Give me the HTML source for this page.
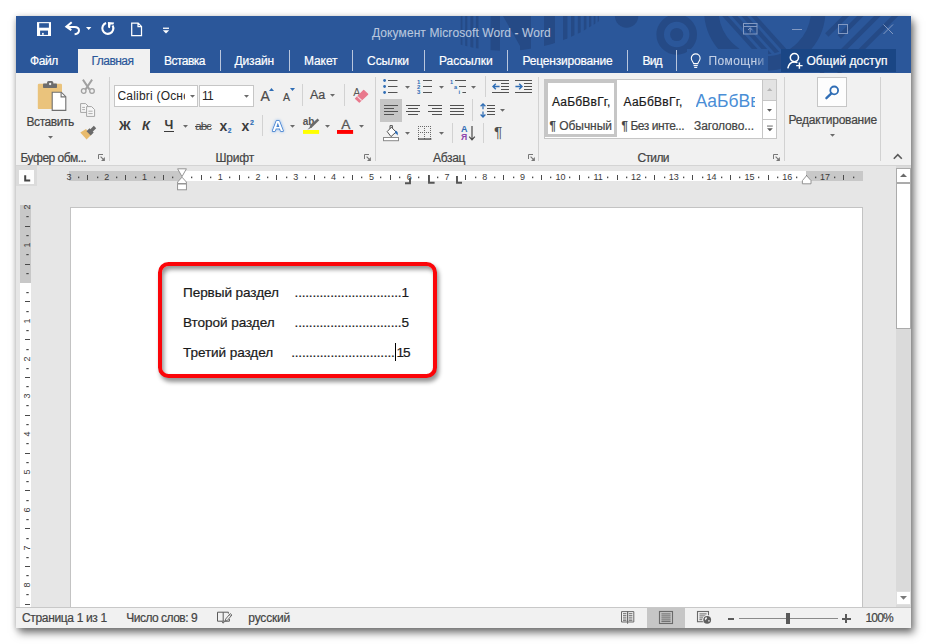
<!DOCTYPE html>
<html lang="ru"><head><meta charset="utf-8"><title>Документ Microsoft Word - Word</title>
<style>
html,body{margin:0;padding:0}
body{width:927px;height:644px;overflow:hidden;background:#fff;position:relative;font-family:"Liberation Sans", sans-serif;font-size:12px}
svg{overflow:visible}
span{-webkit-text-stroke:0.2px currentColor}
</style></head><body>
<div style="position:absolute;left:16px;top:16px;width:895px;height:612px;background:#f1f1f1;box-shadow:0 1px 6px rgba(0,0,0,0.2),3px 5px 8px rgba(0,0,0,0.5);"></div>
<div style="position:absolute;left:16px;top:16px;width:895px;height:57px;background:#2b579a;"></div>
<svg style="position:absolute;left:16px;top:16px;" width="895" height="57" viewBox="0 0 895 57"><defs><clipPath id="bowl"><circle cx="489" cy="-128" r="163"/></clipPath>
<clipPath id="tb"><rect x="0" y="0" width="895" height="57"/></clipPath>
<clipPath id="disc"><circle cx="748.8" cy="-6" r="44.3"/></clipPath><clipPath id="rs"><circle cx="830" cy="-50" r="78"/></clipPath></defs>
<g clip-path="url(#tb)" fill="#254a86">
<g clip-path="url(#bowl)"><rect x="444.7" y="0" width="1.7" height="57"/><rect x="449.2" y="0" width="2.1" height="57"/><rect x="454.4" y="0" width="2.9" height="57"/><rect x="459.9" y="0" width="2.6" height="57"/><rect x="474.6" y="0" width="9.4" height="57"/><rect x="504" y="0" width="11" height="57"/><rect x="528" y="0" width="11" height="57"/><rect x="547" y="0" width="4.4" height="57"/><rect x="555" y="0" width="3.4" height="57"/><rect x="561.8" y="0" width="2.9" height="57"/><rect x="567.8" y="0" width="2.6" height="57"/><rect x="573" y="0" width="2.3" height="57"/><rect x="577.7" y="0" width="1.7" height="57"/><rect x="581.7" y="0" width="1.2" height="57"/><path d="M487 0 L504 30 V0Z"/></g>
<circle cx="610.6" cy="0" r="11.7"/>
<circle cx="660.7" cy="18.5" r="16.5" fill="none" stroke="#254a86" stroke-width="7.6"/>
<circle cx="660.7" cy="18.5" r="6.6"/>
<circle cx="748.8" cy="-6" r="53.5" fill="none" stroke="#254a86" stroke-width="14.5"/>
<g clip-path="url(#disc)" stroke="#254a86" stroke-width="4.2">
<line x1="703.6" y1="-6" x2="750.4" y2="46"/><line x1="713.2" y1="-6" x2="760.0" y2="46"/><line x1="722.8" y1="-6" x2="769.6" y2="46"/><line x1="732.4" y1="-6" x2="779.2" y2="46"/>
</g>
<g stroke="#254a86" stroke-width="4.6">
<line x1="833.8" y1="-4" x2="810.8" y2="19"/><line x1="848.3" y1="-4" x2="823.3" y2="21"/><line x1="865.4" y1="-4" x2="804.4" y2="57"/><line x1="883" y1="-4" x2="822" y2="57"/>
</g>
</g></svg>
<svg style="position:absolute;left:36px;top:21px;" width="16" height="16" viewBox="0 0 16 16"><rect x="1" y="1.1" width="14" height="13.9" fill="#fff"/>
<rect x="3.2" y="2.2" width="9.7" height="4.5" fill="#2b579a"/>
<rect x="4.1" y="9.6" width="7.9" height="4.3" fill="#2b579a"/><rect x="6.1" y="11.9" width="1.6" height="1.9" fill="#fff"/></svg>
<svg style="position:absolute;left:65px;top:20px;" width="18" height="17" viewBox="0 0 18 17"><path d="M2.2 7 H9.4 C12.4 7 14 8.8 14 10.6 C14 12.6 12.4 14 9.6 14.3" fill="none" stroke="#fff" stroke-width="2"/>
<path d="M6.7 2.3 L1.4 6.6 L6.3 10.2" fill="none" stroke="#fff" stroke-width="2.1"/></svg>
<svg style="position:absolute;left:86px;top:26.5px;" width="6" height="4" viewBox="0 0 6 4"><path d="M0 0 H5.4 L2.7 3Z" fill="#fff"/></svg>
<svg style="position:absolute;left:100px;top:21px;" width="16" height="16" viewBox="0 0 16 16"><path d="M6.1 2.1 A5.5 5.5 0 1 0 12.6 4.6" fill="none" stroke="#fff" stroke-width="2.1"/>
<path d="M7.9 0.9 L14.2 1.6 L13.4 3.6 L10.6 3.5 L9.9 7.2 L8.1 6.4Z" fill="#fff"/></svg>
<svg style="position:absolute;left:130px;top:22px;" width="13" height="15" viewBox="0 0 13 15"><path d="M1.7 1.1 H8.2 L11.5 4.4 V13.5 H1.7Z M8 1.2 V4.6 H11.4" fill="none" stroke="#fff" stroke-width="1.25"/></svg>
<svg style="position:absolute;left:161.5px;top:27.4px;" width="8" height="8" viewBox="0 0 8 8"><rect x="1" y="0.6" width="6" height="1.3" fill="#fff"/><path d="M0.8 3.2 H7.2 L4 6.6Z" fill="#fff"/></svg>
<span id="t0" style="position:absolute;left:372px;top:24.5px;font-size:12px;line-height:17px;color:#b9c7de;white-space:nowrap;letter-spacing:0.09px;-webkit-text-stroke:0.1px #b9c7de;">Документ Microsoft Word - Word</span>
<svg style="position:absolute;left:743px;top:23px;" width="15" height="12" viewBox="0 0 15 12"><rect x="0.5" y="0.5" width="13.5" height="10.5" fill="none" stroke="#8299c2" stroke-width="1"/><line x1="0.5" y1="3.5" x2="14" y2="3.5" stroke="#8299c2"/><path d="M7.2 9.5 V5 M5 7 L7.2 4.9 L9.4 7" fill="none" stroke="#8299c2" stroke-width="1"/></svg>
<svg style="position:absolute;left:792px;top:29px;" width="11" height="1" viewBox="0 0 11 1"><rect x="0" y="0" width="10" height="1" fill="#8299c2"/></svg>
<svg style="position:absolute;left:838px;top:24px;" width="10" height="10" viewBox="0 0 10 10"><rect x="0.5" y="0.5" width="9" height="9" fill="none" stroke="#8299c2" stroke-width="1"/></svg>
<svg style="position:absolute;left:883px;top:24px;" width="11" height="11" viewBox="0 0 11 11"><path d="M0.5 0.5 L10 10 M10 0.5 L0.5 10" stroke="#8299c2" stroke-width="1" fill="none"/></svg>
<div style="position:absolute;left:78px;top:49px;width:72px;height:24px;background:#f1f1f1;"></div>
<span id="t1" style="position:absolute;left:30px;top:52.9px;font-size:12px;line-height:17px;color:#fff;white-space:nowrap;letter-spacing:-0.38px;">Файл</span>
<span id="t2" style="position:absolute;left:91.5px;top:52.9px;font-size:12px;line-height:17px;color:#2b579a;white-space:nowrap;letter-spacing:-0.53px;">Главная</span>
<span id="t3" style="position:absolute;left:164px;top:52.9px;font-size:12px;line-height:17px;color:#fff;white-space:nowrap;letter-spacing:-0.52px;">Вставка</span>
<span id="t4" style="position:absolute;left:234.5px;top:52.9px;font-size:12px;line-height:17px;color:#fff;white-space:nowrap;letter-spacing:-0.14px;">Дизайн</span>
<span id="t5" style="position:absolute;left:304px;top:52.9px;font-size:12px;line-height:17px;color:#fff;white-space:nowrap;letter-spacing:-0.09px;">Макет</span>
<span id="t6" style="position:absolute;left:367px;top:52.9px;font-size:12px;line-height:17px;color:#fff;white-space:nowrap;letter-spacing:-0.04px;">Ссылки</span>
<span id="t7" style="position:absolute;left:439px;top:52.9px;font-size:12px;line-height:17px;color:#fff;white-space:nowrap;letter-spacing:-0.04px;">Рассылки</span>
<span id="t8" style="position:absolute;left:522.5px;top:52.9px;font-size:12px;line-height:17px;color:#fff;white-space:nowrap;letter-spacing:-0.19px;">Рецензирование</span>
<span id="t9" style="position:absolute;left:642.5px;top:52.9px;font-size:12px;line-height:17px;color:#fff;white-space:nowrap;letter-spacing:-0.81px;">Вид</span>
<div style="position:absolute;left:219.5px;top:50px;width:1px;height:21px;background:#b9c6dd;"></div>
<div style="position:absolute;left:288.5px;top:50px;width:1px;height:21px;background:#b9c6dd;"></div>
<div style="position:absolute;left:351.5px;top:50px;width:1px;height:21px;background:#b9c6dd;"></div>
<div style="position:absolute;left:423.5px;top:50px;width:1px;height:21px;background:#b9c6dd;"></div>
<div style="position:absolute;left:507.0px;top:50px;width:1px;height:21px;background:#b9c6dd;"></div>
<div style="position:absolute;left:627.0px;top:50px;width:1px;height:21px;background:#b9c6dd;"></div>
<div style="position:absolute;left:675.5px;top:50px;width:1px;height:21px;background:#b9c6dd;"></div>
<div style="position:absolute;left:687px;top:49px;width:81px;height:23px;background:#2b579a;"></div>
<svg style="position:absolute;left:690px;top:53.4px;" width="12" height="17" viewBox="0 0 12 17"><path d="M3.6 10.6 C3.4 9 1.3 8 1.3 5.3 C1.3 2.8 3.3 0.9 5.7 0.9 C8.1 0.9 10.1 2.8 10.1 5.3 C10.1 8 8 9 7.8 10.6 Z" fill="none" stroke="#fff" stroke-width="1.1"/>
<line x1="3.6" y1="12.6" x2="7.8" y2="12.6" stroke="#fff" stroke-width="1.1"/><line x1="4.2" y1="14.4" x2="7.2" y2="14.4" stroke="#fff" stroke-width="1.1"/></svg>
<span id="t10" style="position:absolute;left:708.5px;top:52.9px;font-size:12px;line-height:17px;color:#c3cfe5;white-space:nowrap;letter-spacing:0.37px;-webkit-text-stroke:0.1px #c3cfe5;-webkit-mask-image:linear-gradient(90deg,#000 84%,rgba(0,0,0,0.3) 100%);">Помощни</span>
<div style="position:absolute;left:781px;top:49px;width:115px;height:23px;background:#1a4685;"></div>
<svg style="position:absolute;left:787px;top:52px;" width="17" height="17" viewBox="0 0 17 17"><circle cx="7.4" cy="5.6" r="4.1" fill="none" stroke="#fff" stroke-width="1.55"/>
<path d="M0.8 16.4 C1.6 12 4 9.9 7.4 9.9 C8.6 9.9 9.6 10.2 10.4 10.7" fill="none" stroke="#fff" stroke-width="1.55"/>
<path d="M12.4 10.4 V16.8 M9.2 13.6 H15.6" stroke="#fff" stroke-width="1.45"/></svg>
<span id="t11" style="position:absolute;left:806.5px;top:52.9px;font-size:12px;line-height:17px;color:#fff;white-space:nowrap;letter-spacing:0.03px;">Общий доступ</span>
<div style="position:absolute;left:16px;top:73px;width:895px;height:92px;background:#f1f1f1;"></div>
<div style="position:absolute;left:16px;top:165px;width:895px;height:1px;background:#d4d4d4;"></div>
<div style="position:absolute;left:109.0px;top:77px;width:1px;height:84px;background:#d2d2d2;"></div>
<div style="position:absolute;left:375.0px;top:77px;width:1px;height:84px;background:#d2d2d2;"></div>
<div style="position:absolute;left:538.0px;top:77px;width:1px;height:84px;background:#d2d2d2;"></div>
<div style="position:absolute;left:784.0px;top:77px;width:1px;height:84px;background:#d2d2d2;"></div>
<div style="position:absolute;left:880.0px;top:77px;width:1px;height:84px;background:#d2d2d2;"></div>
<svg style="position:absolute;left:37px;top:80px;" width="31" height="32" viewBox="0 0 31 32"><rect x="0.8" y="3.8" width="24.2" height="25.3" rx="1.2" fill="#eac37c"/>
<rect x="6" y="3.6" width="14" height="4.5" rx="0.8" fill="#6d6d6d"/><rect x="10" y="1" width="6.3" height="4" rx="1.6" fill="#6d6d6d"/><circle cx="13.15" cy="4" r="1.15" fill="#f1f1f1"/>
<path d="M15.2 12.2 H24.3 L28.8 16.7 V30.4 H15.2Z" fill="#fff" stroke="#6f6f6f" stroke-width="1.1"/>
<path d="M24.1 12.4 V16.9 H28.6" fill="none" stroke="#6f6f6f" stroke-width="1.1"/></svg>
<span id="t12" style="position:absolute;left:26.5px;top:113.5px;font-size:12px;line-height:17px;color:#444;white-space:nowrap;letter-spacing:-0.43px;">Вставить</span>
<svg style="position:absolute;left:48.0px;top:136px;" width="5" height="3" viewBox="0 0 5 3"><path d="M0 0 H5 L2.5 2.8Z" fill="#6a6a6a"/></svg>
<svg style="position:absolute;left:80px;top:79px;" width="16" height="16" viewBox="0 0 16 16"><path d="M2.9 0.6 L9.6 10.6 M12.1 0.6 L5.4 10.6" stroke="#a0a0a0" stroke-width="1.9" fill="none"/>
<circle cx="3.7" cy="12" r="2.3" fill="none" stroke="#a0a0a0" stroke-width="1.3"/><circle cx="12" cy="12" r="2.3" fill="none" stroke="#a0a0a0" stroke-width="1.3"/></svg>
<svg style="position:absolute;left:80px;top:103px;" width="16" height="14" viewBox="0 0 16 14"><path d="M0.6 0.6 H5.6 L8 3 V9.4 H0.6Z" fill="#f6f6f6" stroke="#a5a5a5" stroke-width="1"/>
<path d="M6.6 3.6 H11.6 L14.6 6.6 V13.4 H6.6Z" fill="#f6f6f6" stroke="#a5a5a5" stroke-width="1"/>
<path d="M8.4 8.2 H12.6 M8.4 10.6 H12.6 M2.2 4.4 H5 M2.2 6.6 H5" stroke="#a5a5a5" stroke-width="0.9"/></svg>
<svg style="position:absolute;left:80px;top:125px;" width="17" height="16" viewBox="0 0 17 16"><path d="M6 4 L11 9.9 L6.6 14.5 L0.3 7.6Z" fill="#e9bb6c"/>
<path d="M15 2 L11 6" stroke="#6a6a6a" stroke-width="3.4"/><path d="M11.6 5.4 L8.6 8.4" stroke="#6a6a6a" stroke-width="6"/></svg>
<span id="t13" style="position:absolute;left:20.5px;top:149.5px;font-size:12px;line-height:17px;color:#444;white-space:nowrap;letter-spacing:-0.49px;">Буфер обм...</span>
<svg style="position:absolute;left:98px;top:154px;" width="7" height="7" viewBox="0 0 7 7"><path d="M0.5 5 V0.5 H5" fill="none" stroke="#777" stroke-width="1"/><path d="M2.6 2.6 L5.6 5.6" fill="none" stroke="#777" stroke-width="1.1"/><path d="M6.9 3 V6.9 H3Z" fill="#777"/></svg>
<div style="position:absolute;left:114px;top:85px;width:84px;height:22px;background:#fff;border:1px solid #c6c6c6;box-sizing:border-box;"></div>
<div style="position:absolute;left:199px;top:85px;width:55px;height:22px;background:#fff;border:1px solid #c6c6c6;box-sizing:border-box;"></div>
<span id="t14" style="position:absolute;left:117.5px;top:87.5px;font-size:12px;line-height:17px;color:#262626;white-space:nowrap;width:67px;overflow:hidden;letter-spacing:0.2px;-webkit-text-stroke:0;">Calibri (Оснс</span>
<svg style="position:absolute;left:189.5px;top:95px;" width="5" height="3" viewBox="0 0 5 3"><path d="M0 0 H5 L2.5 2.8Z" fill="#6a6a6a"/></svg>
<span id="t15" style="position:absolute;left:202px;top:87.5px;font-size:12px;line-height:17px;color:#262626;white-space:nowrap;letter-spacing:-0.73px;-webkit-text-stroke:0;">11</span>
<svg style="position:absolute;left:244.0px;top:95px;" width="5" height="3" viewBox="0 0 5 3"><path d="M0 0 H5 L2.5 2.8Z" fill="#6a6a6a"/></svg>
<span id="t16" style="position:absolute;left:260.5px;top:86.0px;font-size:14px;line-height:20px;color:#4a4a4a;white-space:nowrap;">A</span>
<svg style="position:absolute;left:268.6px;top:88px;" width="5" height="4" viewBox="0 0 5 4"><path d="M0 3 H5 L2.5 0Z" fill="#2f6db5"/></svg>
<span id="t17" style="position:absolute;left:283px;top:90.0px;font-size:10.5px;line-height:15px;color:#4a4a4a;white-space:nowrap;">A</span>
<svg style="position:absolute;left:290px;top:88.2px;" width="5" height="4" viewBox="0 0 5 4"><path d="M0 0 H5 L2.5 3Z" fill="#2f6db5"/></svg>
<div style="position:absolute;left:302.0px;top:84px;width:1px;height:22px;background:#d2d2d2;"></div>
<span id="t18" style="position:absolute;left:310px;top:86.0px;font-size:12.5px;line-height:18px;color:#4a4a4a;white-space:nowrap;letter-spacing:-0.15px;">Aa</span>
<svg style="position:absolute;left:329.9px;top:94px;" width="5" height="3" viewBox="0 0 5 3"><path d="M0 0 H5 L2.5 2.8Z" fill="#6a6a6a"/></svg>
<div style="position:absolute;left:343.5px;top:84px;width:1px;height:22px;background:#d2d2d2;"></div>
<svg style="position:absolute;left:353px;top:87px;" width="17" height="17" viewBox="0 0 17 17"><text x="0.2" y="8.7" font-family='"Liberation Sans",sans-serif' font-size="10.6" fill="#5a5a5a">A</text>
<path d="M10.7 3.5 L14.7 7.2 L6.3 15.1 L2.5 11.6Z" fill="#e9798d" stroke="#e9798d" stroke-width="1.2" stroke-linejoin="round"/>
<path d="M4.3 9.3 L8.7 13.5" stroke="#f4d9de" stroke-width="1.1"/></svg>
<span id="t19" style="position:absolute;left:119px;top:116.5px;font-size:13px;line-height:18px;color:#3b3b3b;white-space:nowrap;font-weight:bold;letter-spacing:0.65px;-webkit-text-stroke:0;">Ж</span>
<span id="t20" style="position:absolute;left:142px;top:116.5px;font-size:13px;line-height:18px;color:#3b3b3b;white-space:nowrap;font-weight:bold;font-style:italic;letter-spacing:1.00px;-webkit-text-stroke:0;">К</span>
<span id="t21" style="position:absolute;left:164.6px;top:116.0px;font-size:12.5px;line-height:18px;color:#3b3b3b;white-space:nowrap;font-weight:bold;-webkit-text-stroke:0;">Ч</span>
<div style="position:absolute;left:164px;top:131px;width:10px;height:1.3px;background:#3b3b3b;"></div>
<svg style="position:absolute;left:183.0px;top:124.5px;" width="5" height="3" viewBox="0 0 5 3"><path d="M0 0 H5 L2.5 2.8Z" fill="#6a6a6a"/></svg>
<span id="t22" style="position:absolute;left:195.3px;top:117.6px;font-size:11.5px;line-height:16px;color:#4a4a4a;white-space:nowrap;letter-spacing:-0.92px;-webkit-text-stroke:0.1px #4a4a4a;">abc</span>
<div style="position:absolute;left:194.8px;top:126.2px;width:16.6px;height:1px;background:#4a4a4a;"></div>
<span id="t23" style="position:absolute;left:219.5px;top:115.5px;font-size:14px;line-height:20px;color:#3b3b3b;white-space:nowrap;font-weight:bold;letter-spacing:0.20px;-webkit-text-stroke:0;">x</span>
<span id="t24" style="position:absolute;left:227.8px;top:125.7px;font-size:6.5px;line-height:9px;color:#2f6db5;white-space:nowrap;font-weight:bold;">2</span>
<span id="t25" style="position:absolute;left:241.5px;top:115.5px;font-size:14px;line-height:20px;color:#3b3b3b;white-space:nowrap;font-weight:bold;letter-spacing:0.20px;-webkit-text-stroke:0;">x</span>
<span id="t26" style="position:absolute;left:250px;top:117.5px;font-size:7px;line-height:10px;color:#2f6db5;white-space:nowrap;font-weight:bold;">2</span>
<div style="position:absolute;left:262.0px;top:115px;width:1px;height:21px;background:#d2d2d2;"></div>
<svg style="position:absolute;left:270px;top:118px;filter:drop-shadow(0 0 1.4px #7fb0ee);" width="16" height="16" viewBox="0 0 16 16"><text x="7.8" y="13.2" text-anchor="middle" font-family='"Liberation Sans",sans-serif' font-size="15.5" font-weight="bold" fill="#fff" stroke="#3b7bcc" stroke-width="1.5" stroke-linejoin="round" paint-order="stroke">A</text></svg>
<svg style="position:absolute;left:290.0px;top:124.5px;" width="5" height="3" viewBox="0 0 5 3"><path d="M0 0 H5 L2.5 2.8Z" fill="#6a6a6a"/></svg>
<svg style="position:absolute;left:302px;top:117px;" width="18" height="18" viewBox="0 0 18 18"><text x="0.8" y="8" font-family='"Liberation Sans",sans-serif' font-size="10" font-weight="bold" fill="#555">ab</text>
<path d="M16.4 2.4 L8.4 10" stroke="#6a6a6a" stroke-width="2.6" fill="none"/><path d="M8.8 9 L5.4 12.8 L9.8 10.4Z" fill="#6a6a6a"/>
<rect x="1" y="13" width="16.1" height="3.9" fill="#ffff00"/></svg>
<svg style="position:absolute;left:325.0px;top:124.5px;" width="5" height="3" viewBox="0 0 5 3"><path d="M0 0 H5 L2.5 2.8Z" fill="#6a6a6a"/></svg>
<svg style="position:absolute;left:336px;top:117px;" width="18" height="18" viewBox="0 0 18 18"><text x="9.7" y="12.4" text-anchor="middle" font-family='"Liberation Sans",sans-serif' font-size="13.6" fill="#555" stroke="#555" stroke-width="0.3">A</text>
<rect x="1" y="13" width="16.1" height="3.9" fill="#ff0000"/></svg>
<svg style="position:absolute;left:359.0px;top:124.5px;" width="5" height="3" viewBox="0 0 5 3"><path d="M0 0 H5 L2.5 2.8Z" fill="#6a6a6a"/></svg>
<span id="t27" style="position:absolute;left:215.5px;top:149.5px;font-size:12px;line-height:17px;color:#444;white-space:nowrap;letter-spacing:-0.20px;">Шрифт</span>
<svg style="position:absolute;left:364px;top:154px;" width="7" height="7" viewBox="0 0 7 7"><path d="M0.5 5 V0.5 H5" fill="none" stroke="#777" stroke-width="1"/><path d="M2.6 2.6 L5.6 5.6" fill="none" stroke="#777" stroke-width="1.1"/><path d="M6.9 3 V6.9 H3Z" fill="#777"/></svg>
<svg style="position:absolute;left:383px;top:79px;" width="15" height="15" viewBox="0 0 15 15"><circle cx="1.6" cy="1.5" r="1.4" fill="#2f6db5"/><circle cx="1.6" cy="7.5" r="1.4" fill="#2f6db5"/><circle cx="1.6" cy="13.5" r="1.4" fill="#2f6db5"/>
<rect x="5" y="1" width="9.5" height="1" fill="#525252"/><rect x="5" y="7" width="9.5" height="1" fill="#525252"/><rect x="5" y="13" width="9.5" height="1" fill="#525252"/></svg>
<svg style="position:absolute;left:405.0px;top:86px;" width="5" height="3" viewBox="0 0 5 3"><path d="M0 0 H5 L2.5 2.8Z" fill="#6a6a6a"/></svg>
<svg style="position:absolute;left:417px;top:79px;" width="16" height="15" viewBox="0 0 16 15"><g font-family='"Liberation Sans",sans-serif' font-size="6" font-weight="bold" fill="#2f6db5"><text x="0" y="4.6">1</text><text x="0" y="10">2</text><text x="0" y="15.2">3</text></g>
<rect x="6" y="1" width="9" height="1" fill="#525252"/><rect x="6" y="7" width="9" height="1" fill="#525252"/><rect x="6" y="13" width="9" height="1" fill="#525252"/></svg>
<svg style="position:absolute;left:439.0px;top:86px;" width="5" height="3" viewBox="0 0 5 3"><path d="M0 0 H5 L2.5 2.8Z" fill="#6a6a6a"/></svg>
<svg style="position:absolute;left:450px;top:79px;" width="17" height="15" viewBox="0 0 17 15"><g font-family='"Liberation Sans",sans-serif' font-size="5.6" font-weight="bold" fill="#2f6db5"><text x="0" y="4.6">1</text><text x="4" y="10">a</text><text x="8.4" y="15.2">i</text></g>
<rect x="5" y="1" width="11" height="1" fill="#525252"/><rect x="9" y="7" width="7" height="1" fill="#525252"/><rect x="12.4" y="13" width="3.6" height="1" fill="#525252"/></svg>
<svg style="position:absolute;left:471.0px;top:86px;" width="5" height="3" viewBox="0 0 5 3"><path d="M0 0 H5 L2.5 2.8Z" fill="#6a6a6a"/></svg>
<div style="position:absolute;left:485.0px;top:76px;width:1px;height:21px;background:#d2d2d2;"></div>
<svg style="position:absolute;left:492px;top:79px;" width="18" height="15" viewBox="0 0 18 15"><rect x="0" y="1" width="17" height="1" fill="#525252"/><rect x="0" y="13" width="17" height="1" fill="#525252"/>
<rect x="9" y="4" width="8" height="1" fill="#525252"/><rect x="9" y="7" width="8" height="1" fill="#525252"/><rect x="9" y="10" width="8" height="1" fill="#525252"/>
<path d="M7.6 7.5 H1.2 M3.8 4.7 L1 7.5 L3.8 10.3" fill="none" stroke="#2f6db5" stroke-width="1.4"/></svg>
<svg style="position:absolute;left:515px;top:79px;" width="18" height="15" viewBox="0 0 18 15"><rect x="0" y="1" width="17" height="1" fill="#525252"/><rect x="0" y="13" width="17" height="1" fill="#525252"/>
<rect x="9" y="4" width="8" height="1" fill="#525252"/><rect x="9" y="7" width="8" height="1" fill="#525252"/><rect x="9" y="10" width="8" height="1" fill="#525252"/>
<path d="M0.4 7.5 H6.8 M4.2 4.7 L7 7.5 L4.2 10.3" fill="none" stroke="#2f6db5" stroke-width="1.4"/></svg>
<div style="position:absolute;left:380px;top:99px;width:22px;height:23px;background:#c6c6c6;"></div>
<svg style="position:absolute;left:384px;top:105px;" width="16" height="12" viewBox="0 0 16 12"><rect x="0" y="0" width="14" height="1" fill="#525252"/><rect x="0" y="3" width="10" height="1" fill="#525252"/><rect x="0" y="6" width="14" height="1" fill="#525252"/><rect x="0" y="9" width="10" height="1" fill="#525252"/></svg>
<svg style="position:absolute;left:406px;top:105px;" width="16" height="12" viewBox="0 0 16 12"><rect x="0" y="0" width="14" height="1" fill="#525252"/><rect x="2" y="3" width="10" height="1" fill="#525252"/><rect x="0" y="6" width="14" height="1" fill="#525252"/><rect x="2" y="9" width="10" height="1" fill="#525252"/></svg>
<svg style="position:absolute;left:428px;top:105px;" width="16" height="12" viewBox="0 0 16 12"><rect x="0" y="0" width="14" height="1" fill="#525252"/><rect x="4" y="3" width="10" height="1" fill="#525252"/><rect x="0" y="6" width="14" height="1" fill="#525252"/><rect x="4" y="9" width="10" height="1" fill="#525252"/></svg>
<svg style="position:absolute;left:450px;top:105px;" width="16" height="12" viewBox="0 0 16 12"><rect x="0" y="0" width="14" height="1" fill="#525252"/><rect x="0" y="3" width="14" height="1" fill="#525252"/><rect x="0" y="6" width="14" height="1" fill="#525252"/><rect x="0" y="9" width="14" height="1" fill="#525252"/></svg>
<div style="position:absolute;left:472.0px;top:99px;width:1px;height:22px;background:#d2d2d2;"></div>
<svg style="position:absolute;left:480px;top:103px;" width="16" height="15" viewBox="0 0 16 15"><path d="M3 0.8 V6.2 M0.6 3.3 L3 0.8 L5.4 3.3 M3 8.6 V14 M0.6 11.5 L3 14 L5.4 11.5" fill="none" stroke="#2f6db5" stroke-width="1.25"/>
<rect x="7" y="2" width="8" height="1" fill="#525252"/><rect x="7" y="5" width="8" height="1" fill="#525252"/><rect x="7" y="8" width="8" height="1" fill="#525252"/><rect x="7" y="11" width="8" height="1" fill="#525252"/></svg>
<svg style="position:absolute;left:500.1px;top:109px;" width="5" height="3" viewBox="0 0 5 3"><path d="M0 0 H5 L2.5 2.8Z" fill="#6a6a6a"/></svg>
<svg style="position:absolute;left:383px;top:125px;" width="17" height="17" viewBox="0 0 17 17"><path d="M4.2 6.6 L8.4 2.2 L13 7 L8 11.6 Z" fill="#fff" stroke="#525252" stroke-width="1"/><path d="M7 3.8 V0.6 H9.4 V3.2" fill="none" stroke="#525252" stroke-width="1"/>
<path d="M12.4 5.4 C14.6 6 15.4 8 14.6 10.4 C13.8 9 13 8.4 12 8.2Z" fill="#2f6db5"/>
<rect x="0.5" y="12.5" width="15" height="3.2" fill="#fff" stroke="#8a8a8a" stroke-width="1"/></svg>
<svg style="position:absolute;left:405.0px;top:131.6px;" width="5" height="3" viewBox="0 0 5 3"><path d="M0 0 H5 L2.5 2.8Z" fill="#6a6a6a"/></svg>
<svg style="position:absolute;left:418px;top:126px;" width="14" height="14" viewBox="0 0 14 14"><g fill="#6a6a6a"><rect x="0" y="0" width="1" height="1"/><rect x="0" y="6" width="1" height="1"/><rect x="0" y="0" width="1" height="1"/><rect x="6" y="0" width="1" height="1"/><rect x="12" y="0" width="1" height="1"/><rect x="2" y="0" width="1" height="1"/><rect x="2" y="6" width="1" height="1"/><rect x="0" y="2" width="1" height="1"/><rect x="6" y="2" width="1" height="1"/><rect x="12" y="2" width="1" height="1"/><rect x="4" y="0" width="1" height="1"/><rect x="4" y="6" width="1" height="1"/><rect x="0" y="4" width="1" height="1"/><rect x="6" y="4" width="1" height="1"/><rect x="12" y="4" width="1" height="1"/><rect x="6" y="0" width="1" height="1"/><rect x="6" y="6" width="1" height="1"/><rect x="0" y="6" width="1" height="1"/><rect x="6" y="6" width="1" height="1"/><rect x="12" y="6" width="1" height="1"/><rect x="8" y="0" width="1" height="1"/><rect x="8" y="6" width="1" height="1"/><rect x="0" y="8" width="1" height="1"/><rect x="6" y="8" width="1" height="1"/><rect x="12" y="8" width="1" height="1"/><rect x="10" y="0" width="1" height="1"/><rect x="10" y="6" width="1" height="1"/><rect x="0" y="10" width="1" height="1"/><rect x="6" y="10" width="1" height="1"/><rect x="12" y="10" width="1" height="1"/><rect x="12" y="0" width="1" height="1"/><rect x="12" y="6" width="1" height="1"/><rect x="0" y="12" width="1" height="1"/><rect x="6" y="12" width="1" height="1"/><rect x="12" y="12" width="1" height="1"/></g><rect x="0" y="12.4" width="13.4" height="1.3" fill="#444"/></svg>
<svg style="position:absolute;left:439.0px;top:131.6px;" width="5" height="3" viewBox="0 0 5 3"><path d="M0 0 H5 L2.5 2.8Z" fill="#6a6a6a"/></svg>
<div style="position:absolute;left:452.0px;top:123px;width:1px;height:20px;background:#d2d2d2;"></div>
<svg style="position:absolute;left:461px;top:125px;" width="16" height="17" viewBox="0 0 16 17"><g font-family='"Liberation Sans",sans-serif' font-weight="bold"><text x="0" y="6.8" font-size="9" fill="#2f6db5">А</text><text x="0" y="15.4" font-size="8.6" fill="#8e44ad">Я</text></g>
<path d="M11 1 V14.6 M8.2 11.6 L11 14.8 L13.8 11.6" fill="none" stroke="#4a4a4a" stroke-width="1.2"/></svg>
<div style="position:absolute;left:483.0px;top:123px;width:1px;height:20px;background:#d2d2d2;"></div>
<span id="t28" style="position:absolute;left:494px;top:121.2px;font-size:15.5px;line-height:22px;color:#4f4f4f;white-space:nowrap;-webkit-text-stroke:0;">¶</span>
<span id="t29" style="position:absolute;left:433px;top:149.5px;font-size:12px;line-height:17px;color:#444;white-space:nowrap;letter-spacing:-0.33px;">Абзац</span>
<svg style="position:absolute;left:527.5px;top:154px;" width="7" height="7" viewBox="0 0 7 7"><path d="M0.5 5 V0.5 H5" fill="none" stroke="#777" stroke-width="1"/><path d="M2.6 2.6 L5.6 5.6" fill="none" stroke="#777" stroke-width="1.1"/><path d="M6.9 3 V6.9 H3Z" fill="#777"/></svg>
<div style="position:absolute;left:544px;top:79px;width:219px;height:60px;background:#fff;border:1px solid #c6c6c6;box-sizing:border-box;"></div>
<div style="position:absolute;left:545px;top:80px;width:72px;height:57px;background:#fff;border:3px solid #c6c6c6;box-sizing:border-box;"></div>
<span id="t30" style="position:absolute;left:552px;top:93.5px;font-size:12px;line-height:17px;color:#1a1a1a;white-space:nowrap;letter-spacing:0.20px;">АаБбВвГг,</span>
<span id="t31" style="position:absolute;left:549.5px;top:117.5px;font-size:12px;line-height:17px;color:#444;white-space:nowrap;letter-spacing:-0.04px;">¶ Обычный</span>
<span id="t32" style="position:absolute;left:623.5px;top:93.5px;font-size:12px;line-height:17px;color:#1a1a1a;white-space:nowrap;letter-spacing:0.26px;">АаБбВвГг,</span>
<span id="t33" style="position:absolute;left:621.5px;top:117.5px;font-size:12px;line-height:17px;color:#444;white-space:nowrap;letter-spacing:-0.44px;">¶ Без инте...</span>
<span id="t34" style="position:absolute;left:695.5px;top:88.5px;font-size:17.5px;line-height:24px;color:#4a8ed6;white-space:nowrap;width:59px;overflow:hidden;-webkit-text-stroke:0;">АаБбВв</span>
<span id="t35" style="position:absolute;left:694px;top:117.5px;font-size:12px;line-height:17px;color:#444;white-space:nowrap;letter-spacing:-0.11px;">Заголово...</span>
<div style="position:absolute;left:762px;top:79px;width:15px;height:60px;background:#fff;border:1px solid #c6c6c6;box-sizing:border-box;"></div>
<div style="position:absolute;left:763px;top:80px;width:13px;height:20px;background:#e3e3e3;"></div>
<div style="position:absolute;left:763px;top:100px;width:13px;height:1px;background:#c6c6c6;"></div>
<div style="position:absolute;left:763px;top:119px;width:13px;height:1px;background:#c6c6c6;"></div>
<svg style="position:absolute;left:766.6px;top:88px;" width="6" height="4" viewBox="0 0 6 4"><path d="M0 3 H5.4 L2.7 0Z" fill="#b5b5b5"/></svg>
<svg style="position:absolute;left:767.0px;top:108.5px;" width="5" height="3" viewBox="0 0 5 3"><path d="M0 0 H5 L2.5 2.8Z" fill="#5a5a5a"/></svg>
<svg style="position:absolute;left:766.6px;top:125px;" width="6" height="8" viewBox="0 0 6 8"><rect x="0" y="0.6" width="5.8" height="0.9" fill="#5a5a5a"/><path d="M0 3.2 H5.8 L2.9 6.2Z" fill="#5a5a5a"/></svg>
<span id="t36" style="position:absolute;left:637.5px;top:149.5px;font-size:12px;line-height:17px;color:#444;white-space:nowrap;letter-spacing:-0.66px;">Стили</span>
<svg style="position:absolute;left:773px;top:154px;" width="7" height="7" viewBox="0 0 7 7"><path d="M0.5 5 V0.5 H5" fill="none" stroke="#777" stroke-width="1"/><path d="M2.6 2.6 L5.6 5.6" fill="none" stroke="#777" stroke-width="1.1"/><path d="M6.9 3 V6.9 H3Z" fill="#777"/></svg>
<div style="position:absolute;left:817px;top:77px;width:30px;height:30px;background:#fdfdfd;border:1px solid #c6c6c6;box-sizing:border-box;"></div>
<svg style="position:absolute;left:825px;top:85px;" width="15" height="15" viewBox="0 0 15 15"><circle cx="9.2" cy="5.4" r="3.9" fill="none" stroke="#2f6db5" stroke-width="1.8"/><path d="M6.4 8.4 L1.4 13.2" stroke="#2f6db5" stroke-width="2.3" stroke-linecap="round"/></svg>
<span id="t37" style="position:absolute;left:788.5px;top:111.5px;font-size:12px;line-height:17px;color:#444;white-space:nowrap;letter-spacing:-0.21px;">Редактирование</span>
<svg style="position:absolute;left:830.0px;top:134px;" width="5" height="3" viewBox="0 0 5 3"><path d="M0 0 H5 L2.5 2.8Z" fill="#6a6a6a"/></svg>
<svg style="position:absolute;left:893px;top:153px;" width="10" height="7" viewBox="0 0 10 7"><path d="M0.8 5.8 L4.8 1.6 L8.8 5.8" fill="none" stroke="#5a5a5a" stroke-width="1.6"/></svg>
<div style="position:absolute;left:16px;top:166px;width:895px;height:442px;background:#e6e6e6;"></div>
<div style="position:absolute;left:16px;top:166.3px;width:21px;height:20px;background:#dbdbdb;"></div>
<div style="position:absolute;left:18.6px;top:169.6px;width:15.2px;height:14px;background:#fdfdfd;"></div>
<svg style="position:absolute;left:24px;top:174.6px;" width="8" height="8" viewBox="0 0 8 8"><path d="M1.2 0.2 V5.4 H6.2" fill="none" stroke="#444" stroke-width="2"/></svg>
<div style="position:absolute;left:69.00000000000001px;top:171px;width:113.39999999999999px;height:10px;background:#c8c8c8;"></div>
<div style="position:absolute;left:182.4px;top:171px;width:623.6999999999999px;height:10px;background:#ffffff;"></div>
<div style="position:absolute;left:806.0999999999999px;top:171px;width:56.700000000000045px;height:10px;background:#c8c8c8;"></div>
<span id="t38" style="position:absolute;left:69.00000000000001px;top:170.5px;font-size:9px;line-height:13px;color:#3a3a3a;white-space:nowrap;transform:translateX(-50%);-webkit-text-stroke:0;">3</span>
<span id="t39" style="position:absolute;left:106.80000000000001px;top:170.5px;font-size:9px;line-height:13px;color:#3a3a3a;white-space:nowrap;transform:translateX(-50%);-webkit-text-stroke:0;">2</span>
<span id="t40" style="position:absolute;left:144.60000000000002px;top:170.5px;font-size:9px;line-height:13px;color:#3a3a3a;white-space:nowrap;transform:translateX(-50%);-webkit-text-stroke:0;">1</span>
<span id="t41" style="position:absolute;left:220.2px;top:170.5px;font-size:9px;line-height:13px;color:#3a3a3a;white-space:nowrap;transform:translateX(-50%);-webkit-text-stroke:0;">1</span>
<span id="t42" style="position:absolute;left:258.0px;top:170.5px;font-size:9px;line-height:13px;color:#3a3a3a;white-space:nowrap;transform:translateX(-50%);-webkit-text-stroke:0;">2</span>
<span id="t43" style="position:absolute;left:295.8px;top:170.5px;font-size:9px;line-height:13px;color:#3a3a3a;white-space:nowrap;transform:translateX(-50%);-webkit-text-stroke:0;">3</span>
<span id="t44" style="position:absolute;left:333.6px;top:170.5px;font-size:9px;line-height:13px;color:#3a3a3a;white-space:nowrap;transform:translateX(-50%);-webkit-text-stroke:0;">4</span>
<span id="t45" style="position:absolute;left:371.4px;top:170.5px;font-size:9px;line-height:13px;color:#3a3a3a;white-space:nowrap;transform:translateX(-50%);-webkit-text-stroke:0;">5</span>
<span id="t46" style="position:absolute;left:409.2px;top:170.5px;font-size:9px;line-height:13px;color:#3a3a3a;white-space:nowrap;transform:translateX(-50%);-webkit-text-stroke:0;">6</span>
<span id="t47" style="position:absolute;left:447.0px;top:170.5px;font-size:9px;line-height:13px;color:#3a3a3a;white-space:nowrap;transform:translateX(-50%);-webkit-text-stroke:0;">7</span>
<span id="t48" style="position:absolute;left:484.79999999999995px;top:170.5px;font-size:9px;line-height:13px;color:#3a3a3a;white-space:nowrap;transform:translateX(-50%);-webkit-text-stroke:0;">8</span>
<span id="t49" style="position:absolute;left:522.6px;top:170.5px;font-size:9px;line-height:13px;color:#3a3a3a;white-space:nowrap;transform:translateX(-50%);-webkit-text-stroke:0;">9</span>
<span id="t50" style="position:absolute;left:560.4px;top:170.5px;font-size:9px;line-height:13px;color:#3a3a3a;white-space:nowrap;transform:translateX(-50%);-webkit-text-stroke:0;">10</span>
<span id="t51" style="position:absolute;left:598.1999999999999px;top:170.5px;font-size:9px;line-height:13px;color:#3a3a3a;white-space:nowrap;transform:translateX(-50%);-webkit-text-stroke:0;">11</span>
<span id="t52" style="position:absolute;left:636.0px;top:170.5px;font-size:9px;line-height:13px;color:#3a3a3a;white-space:nowrap;transform:translateX(-50%);-webkit-text-stroke:0;">12</span>
<span id="t53" style="position:absolute;left:673.8px;top:170.5px;font-size:9px;line-height:13px;color:#3a3a3a;white-space:nowrap;transform:translateX(-50%);-webkit-text-stroke:0;">13</span>
<span id="t54" style="position:absolute;left:711.5999999999999px;top:170.5px;font-size:9px;line-height:13px;color:#3a3a3a;white-space:nowrap;transform:translateX(-50%);-webkit-text-stroke:0;">14</span>
<span id="t55" style="position:absolute;left:749.4px;top:170.5px;font-size:9px;line-height:13px;color:#3a3a3a;white-space:nowrap;transform:translateX(-50%);-webkit-text-stroke:0;">15</span>
<span id="t56" style="position:absolute;left:787.1999999999999px;top:170.5px;font-size:9px;line-height:13px;color:#3a3a3a;white-space:nowrap;transform:translateX(-50%);-webkit-text-stroke:0;">16</span>
<span id="t57" style="position:absolute;left:824.9999999999999px;top:170.5px;font-size:9px;line-height:13px;color:#3a3a3a;white-space:nowrap;transform:translateX(-50%);-webkit-text-stroke:0;">17</span>
<svg style="position:absolute;left:0px;top:0px;pointer-events:none;" width="927" height="200" viewBox="0 0 927 200"><rect x="78" y="176.6" width="1.3" height="1.6" fill="#4a4a4a"/><rect x="87" y="175" width="1" height="5" fill="#4a4a4a"/><rect x="97" y="176.6" width="1.3" height="1.6" fill="#4a4a4a"/><rect x="116" y="176.6" width="1.3" height="1.6" fill="#4a4a4a"/><rect x="125" y="175" width="1" height="5" fill="#4a4a4a"/><rect x="135" y="176.6" width="1.3" height="1.6" fill="#4a4a4a"/><rect x="154" y="176.6" width="1.3" height="1.6" fill="#4a4a4a"/><rect x="163" y="175" width="1" height="5" fill="#4a4a4a"/><rect x="172" y="176.6" width="1.3" height="1.6" fill="#4a4a4a"/><rect x="191" y="176.6" width="1.3" height="1.6" fill="#4a4a4a"/><rect x="201" y="175" width="1" height="5" fill="#4a4a4a"/><rect x="210" y="176.6" width="1.3" height="1.6" fill="#4a4a4a"/><rect x="229" y="176.6" width="1.3" height="1.6" fill="#4a4a4a"/><rect x="239" y="175" width="1" height="5" fill="#4a4a4a"/><rect x="248" y="176.6" width="1.3" height="1.6" fill="#4a4a4a"/><rect x="267" y="176.6" width="1.3" height="1.6" fill="#4a4a4a"/><rect x="276" y="175" width="1" height="5" fill="#4a4a4a"/><rect x="286" y="176.6" width="1.3" height="1.6" fill="#4a4a4a"/><rect x="305" y="176.6" width="1.3" height="1.6" fill="#4a4a4a"/><rect x="314" y="175" width="1" height="5" fill="#4a4a4a"/><rect x="324" y="176.6" width="1.3" height="1.6" fill="#4a4a4a"/><rect x="343" y="176.6" width="1.3" height="1.6" fill="#4a4a4a"/><rect x="352" y="175" width="1" height="5" fill="#4a4a4a"/><rect x="361" y="176.6" width="1.3" height="1.6" fill="#4a4a4a"/><rect x="380" y="176.6" width="1.3" height="1.6" fill="#4a4a4a"/><rect x="390" y="175" width="1" height="5" fill="#4a4a4a"/><rect x="399" y="176.6" width="1.3" height="1.6" fill="#4a4a4a"/><rect x="418" y="176.6" width="1.3" height="1.6" fill="#4a4a4a"/><rect x="428" y="175" width="1" height="5" fill="#4a4a4a"/><rect x="437" y="176.6" width="1.3" height="1.6" fill="#4a4a4a"/><rect x="456" y="176.6" width="1.3" height="1.6" fill="#4a4a4a"/><rect x="465" y="175" width="1" height="5" fill="#4a4a4a"/><rect x="475" y="176.6" width="1.3" height="1.6" fill="#4a4a4a"/><rect x="494" y="176.6" width="1.3" height="1.6" fill="#4a4a4a"/><rect x="503" y="175" width="1" height="5" fill="#4a4a4a"/><rect x="513" y="176.6" width="1.3" height="1.6" fill="#4a4a4a"/><rect x="532" y="176.6" width="1.3" height="1.6" fill="#4a4a4a"/><rect x="541" y="175" width="1" height="5" fill="#4a4a4a"/><rect x="550" y="176.6" width="1.3" height="1.6" fill="#4a4a4a"/><rect x="569" y="176.6" width="1.3" height="1.6" fill="#4a4a4a"/><rect x="579" y="175" width="1" height="5" fill="#4a4a4a"/><rect x="588" y="176.6" width="1.3" height="1.6" fill="#4a4a4a"/><rect x="607" y="176.6" width="1.3" height="1.6" fill="#4a4a4a"/><rect x="617" y="175" width="1" height="5" fill="#4a4a4a"/><rect x="626" y="176.6" width="1.3" height="1.6" fill="#4a4a4a"/><rect x="645" y="176.6" width="1.3" height="1.6" fill="#4a4a4a"/><rect x="654" y="175" width="1" height="5" fill="#4a4a4a"/><rect x="664" y="176.6" width="1.3" height="1.6" fill="#4a4a4a"/><rect x="683" y="176.6" width="1.3" height="1.6" fill="#4a4a4a"/><rect x="692" y="175" width="1" height="5" fill="#4a4a4a"/><rect x="702" y="176.6" width="1.3" height="1.6" fill="#4a4a4a"/><rect x="721" y="176.6" width="1.3" height="1.6" fill="#4a4a4a"/><rect x="730" y="175" width="1" height="5" fill="#4a4a4a"/><rect x="739" y="176.6" width="1.3" height="1.6" fill="#4a4a4a"/><rect x="758" y="176.6" width="1.3" height="1.6" fill="#4a4a4a"/><rect x="768" y="175" width="1" height="5" fill="#4a4a4a"/><rect x="777" y="176.6" width="1.3" height="1.6" fill="#4a4a4a"/><rect x="796" y="176.6" width="1.3" height="1.6" fill="#4a4a4a"/><rect x="806" y="175" width="1" height="5" fill="#4a4a4a"/><rect x="815" y="176.6" width="1.3" height="1.6" fill="#4a4a4a"/><rect x="834" y="176.6" width="1.3" height="1.6" fill="#4a4a4a"/><rect x="843" y="175" width="1" height="5" fill="#4a4a4a"/><rect x="853" y="176.6" width="1.3" height="1.6" fill="#4a4a4a"/></svg>
<svg style="position:absolute;left:177.4px;top:167.5px;" width="10" height="23" viewBox="0 0 10 23"><path d="M0.6 0.8 H9.4 L5 8.6Z" fill="#fff" stroke="#8a8a8a" stroke-width="0.9"/>
<path d="M5 9.2 L9.4 14 V15.6 H0.6 V14 Z" fill="#fff" stroke="#8a8a8a" stroke-width="0.9"/>
<rect x="0.6" y="16" width="8.8" height="5.8" fill="#fff" stroke="#8a8a8a" stroke-width="0.9"/></svg>
<svg style="position:absolute;left:801.4999999999999px;top:174.5px;" width="10" height="10" viewBox="0 0 10 10"><path d="M4.6 0.6 L9 5.6 V8.8 H0.4 V5.6Z" fill="#fff" stroke="#8a8a8a" stroke-width="0.9"/></svg>
<svg style="position:absolute;left:404.8px;top:177.5px;" width="7" height="7" viewBox="0 0 7 7"><path d="M5 0 V5.3 H0" fill="none" stroke="#555" stroke-width="1.9"/></svg>
<svg style="position:absolute;left:427.5px;top:175px;" width="7" height="9" viewBox="0 0 7 9"><path d="M1 0 V7.7 H6.6" fill="none" stroke="#555" stroke-width="1.9"/></svg>
<svg style="position:absolute;left:456px;top:176px;" width="7" height="8" viewBox="0 0 7 8"><path d="M1 0 V6.7 H6" fill="none" stroke="#555" stroke-width="1.9"/></svg>
<div style="position:absolute;left:20px;top:205.4px;width:11px;height:77.6px;background:#c8c8c8;"></div>
<div style="position:absolute;left:20px;top:283.0px;width:11px;height:325.0px;background:#ffffff;"></div>
<span style="position:absolute;left:26.9px;top:207.4px;font-size:9px;line-height:10px;color:#3a3a3a;-webkit-text-stroke:0;transform:translate(-50%,-50%) rotate(-90deg);">2</span>
<span style="position:absolute;left:26.9px;top:245.2px;font-size:9px;line-height:10px;color:#3a3a3a;-webkit-text-stroke:0;transform:translate(-50%,-50%) rotate(-90deg);">1</span>
<span style="position:absolute;left:26.9px;top:320.8px;font-size:9px;line-height:10px;color:#3a3a3a;-webkit-text-stroke:0;transform:translate(-50%,-50%) rotate(-90deg);">1</span>
<span style="position:absolute;left:26.9px;top:358.6px;font-size:9px;line-height:10px;color:#3a3a3a;-webkit-text-stroke:0;transform:translate(-50%,-50%) rotate(-90deg);">2</span>
<span style="position:absolute;left:26.9px;top:396.4px;font-size:9px;line-height:10px;color:#3a3a3a;-webkit-text-stroke:0;transform:translate(-50%,-50%) rotate(-90deg);">3</span>
<span style="position:absolute;left:26.9px;top:434.2px;font-size:9px;line-height:10px;color:#3a3a3a;-webkit-text-stroke:0;transform:translate(-50%,-50%) rotate(-90deg);">4</span>
<span style="position:absolute;left:26.9px;top:472.0px;font-size:9px;line-height:10px;color:#3a3a3a;-webkit-text-stroke:0;transform:translate(-50%,-50%) rotate(-90deg);">5</span>
<span style="position:absolute;left:26.9px;top:509.8px;font-size:9px;line-height:10px;color:#3a3a3a;-webkit-text-stroke:0;transform:translate(-50%,-50%) rotate(-90deg);">6</span>
<span style="position:absolute;left:26.9px;top:547.6px;font-size:9px;line-height:10px;color:#3a3a3a;-webkit-text-stroke:0;transform:translate(-50%,-50%) rotate(-90deg);">7</span>
<span style="position:absolute;left:26.9px;top:585.4px;font-size:9px;line-height:10px;color:#3a3a3a;-webkit-text-stroke:0;transform:translate(-50%,-50%) rotate(-90deg);">8</span>
<svg style="position:absolute;left:0px;top:0px;pointer-events:none;" width="927" height="644" viewBox="0 0 927 644"><rect x="26.3" y="216" width="2.4" height="1.2" fill="#4a4a4a"/><rect x="25" y="226" width="5" height="1" fill="#4a4a4a"/><rect x="26.3" y="235" width="2.4" height="1.2" fill="#4a4a4a"/><rect x="26.3" y="254" width="2.4" height="1.2" fill="#4a4a4a"/><rect x="25" y="264" width="5" height="1" fill="#4a4a4a"/><rect x="26.3" y="273" width="2.4" height="1.2" fill="#4a4a4a"/><rect x="26.3" y="292" width="2.4" height="1.2" fill="#4a4a4a"/><rect x="25" y="301" width="5" height="1" fill="#4a4a4a"/><rect x="26.3" y="311" width="2.4" height="1.2" fill="#4a4a4a"/><rect x="26.3" y="330" width="2.4" height="1.2" fill="#4a4a4a"/><rect x="25" y="339" width="5" height="1" fill="#4a4a4a"/><rect x="26.3" y="349" width="2.4" height="1.2" fill="#4a4a4a"/><rect x="26.3" y="368" width="2.4" height="1.2" fill="#4a4a4a"/><rect x="25" y="377" width="5" height="1" fill="#4a4a4a"/><rect x="26.3" y="386" width="2.4" height="1.2" fill="#4a4a4a"/><rect x="26.3" y="405" width="2.4" height="1.2" fill="#4a4a4a"/><rect x="25" y="415" width="5" height="1" fill="#4a4a4a"/><rect x="26.3" y="424" width="2.4" height="1.2" fill="#4a4a4a"/><rect x="26.3" y="443" width="2.4" height="1.2" fill="#4a4a4a"/><rect x="25" y="453" width="5" height="1" fill="#4a4a4a"/><rect x="26.3" y="462" width="2.4" height="1.2" fill="#4a4a4a"/><rect x="26.3" y="481" width="2.4" height="1.2" fill="#4a4a4a"/><rect x="25" y="490" width="5" height="1" fill="#4a4a4a"/><rect x="26.3" y="500" width="2.4" height="1.2" fill="#4a4a4a"/><rect x="26.3" y="519" width="2.4" height="1.2" fill="#4a4a4a"/><rect x="25" y="528" width="5" height="1" fill="#4a4a4a"/><rect x="26.3" y="538" width="2.4" height="1.2" fill="#4a4a4a"/><rect x="26.3" y="557" width="2.4" height="1.2" fill="#4a4a4a"/><rect x="25" y="566" width="5" height="1" fill="#4a4a4a"/><rect x="26.3" y="575" width="2.4" height="1.2" fill="#4a4a4a"/><rect x="26.3" y="594" width="2.4" height="1.2" fill="#4a4a4a"/><rect x="25" y="604" width="5" height="1" fill="#4a4a4a"/></svg>
<div style="position:absolute;left:70.40000000000002px;top:207.4px;width:792.4px;height:400.6px;background:#fff;border:1px solid #c3c3c3;border-bottom:none;box-sizing:border-box;"></div>
<div style="position:absolute;left:157.8px;top:262.3px;width:279px;height:116px;background:#fff;border:4.2px solid #fb0509;border-radius:10.5px;box-sizing:border-box;box-shadow:2px 3.5px 4.5px rgba(0,0,0,0.42),inset 2px 3.5px 4.5px rgba(0,0,0,0.42);"></div>
<span id="t58" style="position:absolute;left:183px;top:282.9px;font-size:13.6px;line-height:19px;color:#1a1a1a;white-space:nowrap;letter-spacing:-0.10px;">Первый раздел</span>
<span id="t59" style="position:absolute;left:183px;top:312.9px;font-size:13.6px;line-height:19px;color:#1a1a1a;white-space:nowrap;letter-spacing:-0.08px;">Второй раздел</span>
<span id="t60" style="position:absolute;left:183px;top:342.8px;font-size:13.6px;line-height:19px;color:#1a1a1a;white-space:nowrap;letter-spacing:-0.10px;">Третий раздел</span>
<span id="t61" style="position:absolute;left:294.6px;top:282.9px;font-size:13.6px;line-height:19px;color:#1a1a1a;white-space:nowrap;letter-spacing:-0.22px;">..............................</span>
<span id="t62" style="position:absolute;left:401.5px;top:282.9px;font-size:13.6px;line-height:19px;color:#1a1a1a;white-space:nowrap;letter-spacing:-0.16px;">1</span>
<span id="t63" style="position:absolute;left:294.6px;top:312.9px;font-size:13.6px;line-height:19px;color:#1a1a1a;white-space:nowrap;letter-spacing:-0.22px;">..............................</span>
<span id="t64" style="position:absolute;left:401.5px;top:312.9px;font-size:13.6px;line-height:19px;color:#1a1a1a;white-space:nowrap;letter-spacing:-0.16px;">5</span>
<span id="t65" style="position:absolute;left:291.2px;top:342.8px;font-size:13.6px;line-height:19px;color:#1a1a1a;white-space:nowrap;letter-spacing:-0.21px;">.............................</span>
<span id="t66" style="position:absolute;left:396.5px;top:342.8px;font-size:13.6px;line-height:19px;color:#1a1a1a;white-space:nowrap;letter-spacing:-1.16px;">15</span>
<div style="position:absolute;left:395px;top:343.4px;width:1px;height:17.6px;background:#000;"></div>
<div style="position:absolute;left:896px;top:166px;width:15px;height:442px;background:#dadada;"></div>
<div style="position:absolute;left:896px;top:168px;width:15px;height:15px;background:#fff;border:1px solid #ababab;box-sizing:border-box;"></div>
<svg style="position:absolute;left:900px;top:173px;" width="8" height="5" viewBox="0 0 8 5"><path d="M0 4 H7 L3.5 0.4Z" fill="#6a6a6a"/></svg>
<div style="position:absolute;left:896px;top:183px;width:15px;height:146px;background:#fff;border:1px solid #ababab;box-sizing:border-box;"></div>
<div style="position:absolute;left:896px;top:590.5px;width:14.5px;height:14px;background:#fff;border:1px solid #e0e0e0;box-sizing:border-box;"></div>
<svg style="position:absolute;left:899.8px;top:595.5px;" width="8" height="5" viewBox="0 0 8 5"><path d="M0 0 H7 L3.5 3.8Z" fill="#7a7a7a"/></svg>
<div style="position:absolute;left:16px;top:608px;width:895px;height:20px;background:#f1f1f1;"></div>
<div style="position:absolute;left:16px;top:607px;width:895px;height:1px;background:#c8c8c8;"></div>
<span id="t67" style="position:absolute;left:22px;top:610.1px;font-size:12px;line-height:17px;color:#444;white-space:nowrap;letter-spacing:-0.34px;">Страница 1 из 1</span>
<span id="t68" style="position:absolute;left:126.2px;top:610.1px;font-size:12px;line-height:17px;color:#444;white-space:nowrap;letter-spacing:-0.50px;">Число слов: 9</span>
<svg style="position:absolute;left:217px;top:611px;" width="17" height="14" viewBox="0 0 17 14"><path d="M0.5 1.2 H6.2 V10.2 H0.5Z M6.2 1.2 H11.4 V2.6 M6.2 10.2 H12.4 V8 M5 10.6 L6.2 12.2 L7.4 10.6" fill="none" stroke="#5a5a5a" stroke-width="1"/>
<path d="M8.7 8 L13.2 2.6 L14.9 4 L10.4 9.4 L8.2 10.2Z" fill="#f1f1f1" stroke="#5a5a5a" stroke-width="0.9"/><path d="M12.2 3.8 L13.8 5.2" stroke="#5a5a5a" stroke-width="0.8"/></svg>
<span id="t69" style="position:absolute;left:248.3px;top:610.1px;font-size:12px;line-height:17px;color:#444;white-space:nowrap;letter-spacing:-0.19px;">русский</span>
<svg style="position:absolute;left:621px;top:611px;" width="14" height="14" viewBox="0 0 14 14"><path d="M0.5 0.6 H6.6 V11 H0.5Z M6.6 0.6 H12.8 V11 H6.6 M6.6 0 V12.8" fill="none" stroke="#6a6a6a" stroke-width="1"/>
<path d="M2 2.6 H5.4 M2 4.4 H5.4 M2 6.2 H5.4 M2 8 H5.4 M2 9.6 H5.4 M7.8 2.6 H11.4 M7.8 4.4 H11.4 M7.8 6.2 H11.4 M7.8 8 H11.4 M7.8 9.6 H11.4" stroke="#6a6a6a" stroke-width="0.9"/></svg>
<div style="position:absolute;left:647px;top:608px;width:37.5px;height:20px;background:#c6c6c6;"></div>
<svg style="position:absolute;left:659px;top:611px;" width="15" height="14" viewBox="0 0 15 14"><rect x="0.5" y="0.5" width="13" height="12" fill="none" stroke="#6a6a6a" stroke-width="1.1"/>
<path d="M2.4 2.9 H11.6 M2.4 4.9 H11.6 M2.4 6.9 H11.6 M2.4 8.9 H11.6 M2.4 10.6 H11.6" stroke="#6a6a6a" stroke-width="1"/></svg>
<svg style="position:absolute;left:697px;top:611px;" width="16" height="14" viewBox="0 0 16 14"><rect x="0.5" y="0.5" width="11" height="10.2" fill="none" stroke="#6a6a6a" stroke-width="1.1"/>
<path d="M2.4 2.9 H9.6 M2.4 4.9 H9.6 M2.4 6.9 H6 M2.4 8.7 H5.4" stroke="#6a6a6a" stroke-width="1"/>
<circle cx="10.2" cy="8.8" r="4.7" fill="#f1f1f1"/><circle cx="10.2" cy="8.8" r="3.9" fill="#5f5f5f"/>
<path d="M8 7 C9 5.8 10.4 6.4 10 7.6 C9.6 8.6 8.6 8.4 8.4 9.6 C8 9 7.6 8 8 7Z M11.4 9 C12.4 8.6 13 9.4 12.4 10.4 C11.8 11.2 11 10.6 11.4 9Z" fill="#f1f1f1"/></svg>
<div style="position:absolute;left:727.5px;top:617.5px;width:6.5px;height:2px;background:#5a5a5a;"></div>
<div style="position:absolute;left:738.5px;top:618px;width:99.5px;height:1px;background:#8a8a8a;"></div>
<div style="position:absolute;left:786px;top:612.5px;width:4px;height:11.5px;background:#5a5a5a;"></div>
<div style="position:absolute;left:841.5px;top:617.5px;width:9px;height:2px;background:#5a5a5a;"></div>
<div style="position:absolute;left:845px;top:614px;width:2px;height:9px;background:#5a5a5a;"></div>
<span id="t70" style="position:absolute;left:865.5px;top:610.1px;font-size:12px;line-height:17px;color:#444;white-space:nowrap;letter-spacing:-0.85px;">100%</span>
</body></html>
